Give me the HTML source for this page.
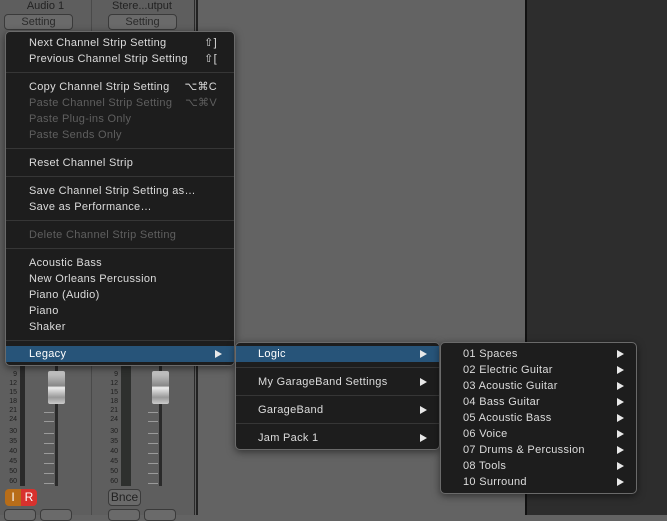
<!DOCTYPE html>
<html><head><meta charset="utf-8"><style>
*{margin:0;padding:0;box-sizing:border-box}
body{width:667px;height:515px;overflow:hidden;background:#636363;position:relative;font-family:"Liberation Sans",sans-serif;font-size:11px}
.a{position:absolute}
.menu{position:absolute;background:#1d1d1d;border:1px solid #6a6a6a;border-radius:5px;box-shadow:0 2px 8px rgba(0,0,0,.5)}
.it{position:absolute;left:0;right:0;height:16px;line-height:16px;color:#dcdcdc;white-space:nowrap;letter-spacing:0.3px}
.it.d{color:#5f5f5f}
.it.h{background:#275479;color:#fff}
.sep{position:absolute;left:0;right:0;height:1px;background:#363636}
.sc{position:absolute;right:17px;color:#dcdcdc}
.d .sc{color:#5f5f5f}
.ar{position:absolute;right:12px;top:4px;width:0;height:0;border-left:7px solid #e8e8e8;border-top:4px solid transparent;border-bottom:4px solid transparent}
.btn{position:absolute;border:1px solid #3a3a3a;border-radius:4px;background:#6a6a6a;color:#2a2a2a;text-align:center}
.num{position:absolute;font-size:7px;color:#1e1e1e;width:12px;text-align:right}
.tick{position:absolute;height:1px;background:#9a9a9a}
</style></head><body>
<div class="a" style="left:0;top:0;width:196px;height:515px;background:#5e5e5e"></div>
<div class="a" style="left:91px;top:0;width:1px;height:515px;background:#4a4a4a"></div>
<div class="a" style="left:194px;top:0;width:1px;height:515px;background:#2a2a2a"></div>
<div class="a" style="left:196px;top:0;width:2px;height:515px;background:#222"></div>
<div class="a" style="left:525px;top:0;width:2px;height:515px;background:#111"></div>
<div class="a" style="left:527px;top:0;width:140px;height:515px;background:#2d2d2d"></div>
<div class="a" style="left:0;top:0;width:91px;text-align:center;color:#222;font-size:11px">Audio 1</div>
<div class="a" style="left:104px;top:0;width:76px;text-align:center;color:#222;font-size:11px">Stere...utput</div>
<div class="btn" style="left:4px;top:14px;width:69px;height:16px;line-height:14px">Setting</div>
<div class="btn" style="left:108px;top:14px;width:69px;height:16px;line-height:14px">Setting</div>
<div class="a" style="left:20px;top:362px;width:5px;height:124px;background:#2a2a2a"></div>
<div class="a" style="left:121px;top:362px;width:10px;height:124px;background:#2e302e"></div>
<div class="a" style="left:55px;top:362px;width:3px;height:124px;background:#2a2a2a"></div>
<div class="a" style="left:159px;top:362px;width:3px;height:124px;background:#2a2a2a"></div>
<div class="a" style="left:48px;top:371px;width:17px;height:33px;border-radius:2px;background:linear-gradient(#d0d0d0,#888 45%,#eee 50%,#999 80%,#ccc)"></div>
<div class="a" style="left:152px;top:371px;width:17px;height:33px;border-radius:2px;background:linear-gradient(#d0d0d0,#888 45%,#eee 50%,#999 80%,#ccc)"></div>
<div class="num" style="left:5px;top:371px">9</div><div class="num" style="left:5px;top:380px">12</div><div class="num" style="left:5px;top:389px">15</div><div class="num" style="left:5px;top:398px">18</div><div class="num" style="left:5px;top:407px">21</div><div class="num" style="left:5px;top:416px">24</div><div class="num" style="left:5px;top:428px">30</div><div class="num" style="left:5px;top:438px">35</div><div class="num" style="left:5px;top:448px">40</div><div class="num" style="left:5px;top:458px">45</div><div class="num" style="left:5px;top:468px">50</div><div class="num" style="left:5px;top:478px">60</div>
<div class="num" style="left:106px;top:371px">9</div><div class="num" style="left:106px;top:380px">12</div><div class="num" style="left:106px;top:389px">15</div><div class="num" style="left:106px;top:398px">18</div><div class="num" style="left:106px;top:407px">21</div><div class="num" style="left:106px;top:416px">24</div><div class="num" style="left:106px;top:428px">30</div><div class="num" style="left:106px;top:438px">35</div><div class="num" style="left:106px;top:448px">40</div><div class="num" style="left:106px;top:458px">45</div><div class="num" style="left:106px;top:468px">50</div><div class="num" style="left:106px;top:478px">60</div>
<div class="tick" style="left:44px;top:412px;width:10px"></div><div class="tick" style="left:44px;top:421px;width:10px"></div><div class="tick" style="left:44px;top:433px;width:10px"></div><div class="tick" style="left:44px;top:443px;width:10px"></div><div class="tick" style="left:44px;top:453px;width:10px"></div><div class="tick" style="left:44px;top:463px;width:10px"></div><div class="tick" style="left:44px;top:473px;width:10px"></div><div class="tick" style="left:44px;top:483px;width:10px"></div>
<div class="tick" style="left:148px;top:412px;width:10px"></div><div class="tick" style="left:148px;top:421px;width:10px"></div><div class="tick" style="left:148px;top:433px;width:10px"></div><div class="tick" style="left:148px;top:443px;width:10px"></div><div class="tick" style="left:148px;top:453px;width:10px"></div><div class="tick" style="left:148px;top:463px;width:10px"></div><div class="tick" style="left:148px;top:473px;width:10px"></div><div class="tick" style="left:148px;top:483px;width:10px"></div>
<div class="a" style="left:5px;top:489px;width:16px;height:17px;background:#b86d18;border-radius:4px 0 0 4px;color:#fff;text-align:center;line-height:17px;font-size:12px">I</div>
<div class="a" style="left:21px;top:489px;width:16px;height:17px;background:#d8322e;border-radius:0 4px 4px 0;color:#fff;text-align:center;line-height:17px;font-size:12px">R</div>
<div class="btn" style="left:108px;top:489px;width:33px;height:17px;line-height:15px;font-size:12px;color:#222">Bnce</div>
<div class="btn" style="left:4px;top:509px;width:32px;height:12px"></div><div class="btn" style="left:40px;top:509px;width:32px;height:12px"></div>
<div class="btn" style="left:108px;top:509px;width:32px;height:12px"></div><div class="btn" style="left:144px;top:509px;width:32px;height:12px"></div>

<div class="menu" style="left:5px;top:31px;width:230px;height:335px">
<div class="it" style="top:3px;padding-left:23px">Next Channel Strip Setting<span class="sc">⇧]</span></div>
<div class="it" style="top:19px;padding-left:23px">Previous Channel Strip Setting<span class="sc">⇧[</span></div>
<div class="sep" style="top:40px"></div>
<div class="it" style="top:47px;padding-left:23px">Copy Channel Strip Setting<span class="sc">⌥⌘C</span></div>
<div class="it d" style="top:63px;padding-left:23px">Paste Channel Strip Setting<span class="sc">⌥⌘V</span></div>
<div class="it d" style="top:79px;padding-left:23px">Paste Plug-ins Only</div>
<div class="it d" style="top:95px;padding-left:23px">Paste Sends Only</div>
<div class="sep" style="top:116px"></div>
<div class="it" style="top:123px;padding-left:23px">Reset Channel Strip</div>
<div class="sep" style="top:144px"></div>
<div class="it" style="top:151px;padding-left:23px">Save Channel Strip Setting as…</div>
<div class="it" style="top:167px;padding-left:23px">Save as Performance…</div>
<div class="sep" style="top:188px"></div>
<div class="it d" style="top:195px;padding-left:23px">Delete Channel Strip Setting</div>
<div class="sep" style="top:216px"></div>
<div class="it" style="top:223px;padding-left:23px">Acoustic Bass</div>
<div class="it" style="top:239px;padding-left:23px">New Orleans Percussion</div>
<div class="it" style="top:255px;padding-left:23px">Piano (Audio)</div>
<div class="it" style="top:271px;padding-left:23px">Piano</div>
<div class="it" style="top:287px;padding-left:23px">Shaker</div>
<div class="sep" style="top:308px"></div>
<div class="it h" style="top:314px;padding-left:23px">Legacy<span class="ar"></span></div>
</div>

<div class="menu" style="left:235px;top:342px;width:205px;height:108px">
<div class="it h" style="top:3px;padding-left:22px">Logic<span class="ar"></span></div>
<div class="sep" style="top:24px"></div>
<div class="it" style="top:31px;padding-left:22px">My GarageBand Settings<span class="ar"></span></div>
<div class="sep" style="top:52px"></div>
<div class="it" style="top:59px;padding-left:22px">GarageBand<span class="ar"></span></div>
<div class="sep" style="top:80px"></div>
<div class="it" style="top:87px;padding-left:22px">Jam Pack 1<span class="ar"></span></div>
</div>

<div class="menu" style="left:440px;top:342px;width:197px;height:152px">
<div class="it" style="top:3px;padding-left:22px">01 Spaces<span class="ar"></span></div>
<div class="it" style="top:19px;padding-left:22px">02 Electric Guitar<span class="ar"></span></div>
<div class="it" style="top:35px;padding-left:22px">03 Acoustic Guitar<span class="ar"></span></div>
<div class="it" style="top:51px;padding-left:22px">04 Bass Guitar<span class="ar"></span></div>
<div class="it" style="top:67px;padding-left:22px">05 Acoustic Bass<span class="ar"></span></div>
<div class="it" style="top:83px;padding-left:22px">06 Voice<span class="ar"></span></div>
<div class="it" style="top:99px;padding-left:22px">07 Drums &amp; Percussion<span class="ar"></span></div>
<div class="it" style="top:115px;padding-left:22px">08 Tools<span class="ar"></span></div>
<div class="it" style="top:131px;padding-left:22px">10 Surround<span class="ar"></span></div>
</div>
</body></html>
